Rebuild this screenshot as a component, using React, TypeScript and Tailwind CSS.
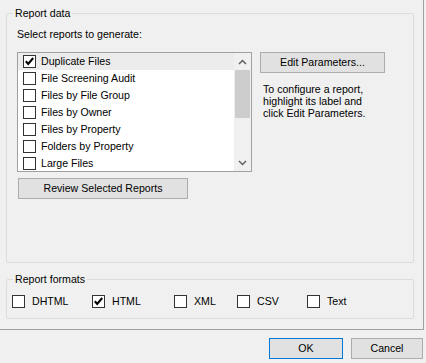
import React from 'react';

const REPORTS = [
  'Duplicate Files',
  'File Screening Audit',
  'Files by File Group',
  'Files by Owner',
  'Files by Property',
  'Folders by Property',
  'Large Files',
];

const FORMATS: { label: string; checked: boolean; width: string }[] = [
  { label: 'DHTML', checked: false, width: 'w-[80px]' },
  { label: 'HTML', checked: true, width: 'w-[82px]' },
  { label: 'XML', checked: false, width: 'w-[63px]' },
  { label: 'CSV', checked: false, width: 'w-[70px]' },
  { label: 'Text', checked: false, width: 'w-[60px]' },
];

function CheckBox({ checked }: { checked: boolean }) {
  return (
    <span className="w-[13px] h-[13px] shrink-0 border border-[#333333] bg-white flex items-center justify-center">
      {checked && (
        <svg width="11" height="11" viewBox="0 0 11 11">
          <path d="M1.8 5.2 L4.2 7.9 L9.2 2" fill="none" stroke="#000" strokeWidth="2.1" />
        </svg>
      )}
    </span>
  );
}

function Chevron({ up }: { up?: boolean }) {
  return (
    <svg width="9" height="6" viewBox="0 0 9 6">
      <path
        d={up ? 'M1 5 L4.5 1.5 L8 5' : 'M1 1 L4.5 4.5 L8 1'}
        fill="none"
        stroke="#606060"
        strokeWidth="1.5"
      />
    </svg>
  );
}

function WinButton({
  children,
  className = '',
  isDefault,
}: {
  children: React.ReactNode;
  className?: string;
  isDefault?: boolean;
}) {
  return (
    <button
      type="button"
      className={`bg-[#e1e1e1] border ${isDefault ? 'border-[#0078d7]' : 'border-[#adadad]'} text-black text-[10.6px] leading-none flex items-center justify-center ${className}`}
    >
      {children}
    </button>
  );
}

function GroupBox({
  title,
  className = '',
  children,
}: {
  title: string;
  className?: string;
  children: React.ReactNode;
}) {
  return (
    <div className={`relative border border-[#dcdcdc] rounded-[2px] ${className}`}>
      <span className="absolute left-[6px] -top-[8px] px-[2px] bg-[#f0f0f0] leading-[14px]">
        {title}
      </span>
      {children}
    </div>
  );
}

export default function App() {
  return (
    <div
      className="w-[426px] h-[363px] bg-[#f0f0f0] text-black text-[10.6px] overflow-hidden flex flex-col"
      style={{ fontFamily: '"Liberation Sans", Arial, sans-serif' }}
    >
      <div className="w-[424px] h-[330px] border-r border-b border-[#a0a0a0] pl-[6px] pt-[13px] flex flex-col">
        <GroupBox title="Report data" className="w-[408px] h-[250px] pl-[10px] pt-[13px]">
          <div className="leading-[14px]">Select reports to generate:</div>
          <div className="flex mt-[11px]">
            <div className="w-[235px] h-[120px] border border-[#a0a0a0] bg-white flex overflow-hidden">
              <div className="flex-1 flex flex-col">
                {REPORTS.map((r, i) => (
                  <div
                    key={r}
                    className={`h-[17px] shrink-0 flex items-center pl-[5px] gap-[5px] ${i === 0 ? 'bg-[#ececec]' : ''}`}
                  >
                    <CheckBox checked={i === 0} />
                    <span className="leading-none">{r}</span>
                  </div>
                ))}
              </div>
              <div className="w-[17px] bg-[#f0f0f0] flex flex-col">
                <div className="h-[17px] flex items-center justify-center">
                  <Chevron up />
                </div>
                <div className="flex-1 px-[1px]">
                  <div className="h-[48px] bg-[#cdcdcd]" />
                </div>
                <div className="h-[17px] flex items-center justify-center">
                  <Chevron />
                </div>
              </div>
            </div>
            <div className="ml-[8px] flex flex-col">
              <WinButton className="w-[125px] h-[21px]">Edit Parameters...</WinButton>
              <div className="mt-[10px] pl-[3px] leading-[12px]">
                To configure a report,
                <br />
                highlight its label and
                <br />
                click Edit Parameters.
              </div>
            </div>
          </div>
          <WinButton className="w-[170px] h-[21px] mt-[6px] ml-[1px]">Review Selected Reports</WinButton>
        </GroupBox>
        <GroupBox title="Report formats" className="w-[408px] h-[40px] mt-[16px] pl-[5px] pt-[15px]">
          <div className="flex items-center">
            {FORMATS.map((f) => (
              <div key={f.label} className={`${f.width} flex items-center gap-[7px]`}>
                <CheckBox checked={f.checked} />
                <span className="leading-none">{f.label}</span>
              </div>
            ))}
          </div>
        </GroupBox>
      </div>
      <div className="flex justify-end gap-[8px] pt-[8px] pr-[3px]">
        <WinButton isDefault className="w-[74px] h-[21px]">
          OK
        </WinButton>
        <WinButton className="w-[72px] h-[21px]">Cancel</WinButton>
      </div>
    </div>
  );
}
